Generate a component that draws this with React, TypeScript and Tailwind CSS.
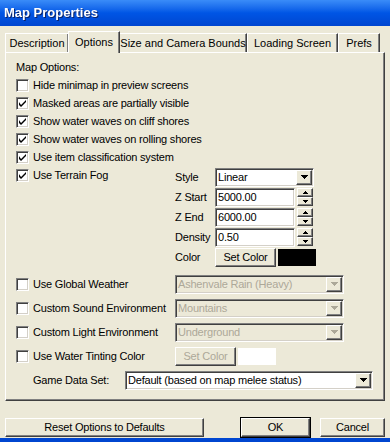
import React from 'react';

const raised =
  'bg-[#ECE9D8] border border-t-white border-l-white border-r-[#404040] border-b-[#404040] shadow-[inset_-1px_-1px_0_#808080]';
const sunken =
  'border border-t-[#808080] border-l-[#808080] border-r-white border-b-white shadow-[inset_1px_1px_0_#404040,inset_-1px_-1px_0_#D4D0C8]';

function Check({ checked }: { checked?: boolean }) {
  return (
    <div className={`w-[13px] h-[13px] shrink-0 bg-white ${sunken} flex items-center justify-center`}>
      {checked && (
        <svg width="7" height="7" viewBox="0 0 7 7">
          <path d="M0 2v3l2 2 5-5V-0L2 5z" fill="#000" />
        </svg>
      )}
    </div>
  );
}

function CheckRow({ label, checked, w }: { label: string; checked?: boolean; w?: string }) {
  return (
    <div className={`flex items-center h-[18px] ${w ?? ''}`}>
      <Check checked={checked} />
      <span className="ml-[4px]">{label}</span>
    </div>
  );
}

function Arrow({ disabled, small, up }: { disabled?: boolean; small?: boolean; up?: boolean }) {
  const c = disabled ? '#ACA899' : '#000';
  if (small)
    return (
      <svg width="5" height="3" viewBox="0 0 5 3">
        <path d={up ? 'M2 0h1v1h1v1h1v1H0V2h1V1h1z' : 'M0 0h5v1H4v1H3v1H2V2H1V1H0z'} fill={c} />
      </svg>
    );
  return (
    <svg width="7" height="4" viewBox="0 0 7 4">
      <path d="M0 0h7v1H6v1H5v1H4v1H3V3H2V2H1V1H0z" fill={c} />
    </svg>
  );
}

function Select({ value, w, disabled }: { value: string; w: string; disabled?: boolean }) {
  return (
    <div className={`${w} h-[19px] ${sunken} ${disabled ? 'bg-[#ECE9D8] text-[#ACA899]' : 'bg-white'} flex items-center`}>
      <span className="flex-1 pl-[2px] truncate">{value}</span>
      <div className={`w-[16px] h-[15px] mr-[1px] ${raised} flex items-center justify-center`}>
        <Arrow disabled={disabled} />
      </div>
    </div>
  );
}

function Spin({ value }: { value: string }) {
  return (
    <div className="flex items-center h-[19px]">
      <div className={`w-[80px] h-[19px] bg-white ${sunken} flex items-center pl-[2px]`}>{value}</div>
      <div className="flex flex-col ml-[2px]">
        <div className={`w-[16px] h-[9px] ${raised} flex items-center justify-center`}>
          <Arrow small up />
        </div>
        <div className={`w-[16px] h-[9px] ${raised} flex items-center justify-center`}>
          <Arrow small />
        </div>
      </div>
    </div>
  );
}

function Btn({ children, w, disabled, def }: { children: React.ReactNode; w: string; disabled?: boolean; def?: boolean }) {
  return (
    <div
      className={`${w} h-[19px] ${raised} flex items-center justify-center ${disabled ? 'text-[#ACA899]' : ''} ${def ? 'outline outline-1 outline-black' : ''}`}
    >
      {children}
    </div>
  );
}

const tabs: [string, string][] = [
  ['Description', 'w-[64px]'],
  ['Options', 'w-[52px]'],
  ['Size and Camera Bounds', 'w-[128px]'],
  ['Loading Screen', 'w-[91px]'],
  ['Prefs', 'w-[42px]'],
];

export default function App() {
  return (
    <div
      className="w-[390px] h-[442px] bg-[#ECE9D8] flex flex-col text-[11px] tracking-[-0.2px] whitespace-nowrap text-black overflow-hidden"
      style={{ fontFamily: '"Liberation Sans", Arial, sans-serif' }}
    >
      {/* Title bar */}
      <div className="h-[26px] shrink-0 bg-gradient-to-b from-[#3A8CF8] via-[#0055E5] to-[#0046D0] flex items-center pl-[4px]">
        <span className="text-white font-bold text-[13px] tracking-normal drop-shadow-[1px_1px_0_#0A246A]">Map Properties</span>
      </div>

      <div className="px-[5px] pt-[5px] flex flex-col">
        {/* Tabs */}
        <div className="flex items-end h-[21px] tracking-normal">
          {tabs.map(([t, w]) =>
            t === 'Options' ? (
              <div
                key={t}
                className={`${w} h-[22px] -mb-[1px] -ml-[1px] -mr-[1px] relative z-10 bg-[#ECE9D8] border-t border-l border-t-white border-l-white border-r border-r-[#404040] shadow-[inset_-1px_0_0_#808080] flex items-center justify-center`}
              >
                {t}
              </div>
            ) : (
              <div
                key={t}
                className={`${w} h-[19px] border-t border-l border-t-white border-l-white border-r border-r-[#404040] shadow-[inset_-1px_0_0_#808080] flex items-center justify-center`}
              >
                {t}
              </div>
            ),
          )}
        </div>

        {/* Panel */}
        <div className="h-[349px] border border-t-white border-l-white border-r-[#404040] border-b-[#404040] shadow-[inset_-1px_-1px_0_#808080] pl-[10px] pt-[6px] flex flex-col">
          <div className="h-[17px] flex items-center">Map Options:</div>
          <CheckRow label="Hide minimap in preview screens" />
          <CheckRow label="Masked areas are partially visible" checked />
          <CheckRow label="Show water waves on cliff shores" checked />
          <CheckRow label="Show water waves on rolling shores" checked />
          <CheckRow label="Use item classification system" checked />

          <div className="flex">
            <CheckRow label="Use Terrain Fog" checked w="w-[159px] shrink-0" />
            <div className="grid grid-cols-[40px_auto] auto-rows-[20px] items-center mt-[1px]">
              <span>Style</span>
              <Select value="Linear" w="w-[99px]" />
              <span>Z Start</span>
              <Spin value="5000.00" />
              <span>Z End</span>
              <Spin value="6000.00" />
              <span>Density</span>
              <Spin value="0.50" />
              <span>Color</span>
              <div className="flex items-center">
                <Btn w="w-[61px]">Set Color</Btn>
                <div className="w-[38px] h-[17px] ml-[2px] bg-black" />
              </div>
            </div>
          </div>

          <div className="flex flex-col mt-[5px]">
            {[
              ['Use Global Weather', 'Ashenvale Rain (Heavy)'],
              ['Custom Sound Environment', 'Mountains'],
              ['Custom Light Environment', 'Underground'],
            ].map(([l, v]) => (
              <div key={l} className="flex items-center h-[24px]">
                <CheckRow label={l} w="w-[159px] shrink-0" />
                <Select value={v} w="w-[169px]" disabled />
              </div>
            ))}
            <div className="flex items-center h-[24px]">
              <CheckRow label="Use Water Tinting Color" w="w-[159px] shrink-0" />
              <Btn w="w-[61px]" disabled>
                Set Color
              </Btn>
              <div className="w-[38px] h-[17px] ml-[2px] bg-white" />
            </div>
            <div className="flex items-center h-[24px]">
              <span className="ml-[17px] w-[92px]">Game Data Set:</span>
              <Select value="Default (based on map melee status)" w="w-[248px]" />
            </div>
          </div>
        </div>

        {/* Buttons */}
        <div className="flex items-center mt-[16px] h-[20px]">
          <Btn w="w-[200px]">Reset Options to Defaults</Btn>
          <div className="ml-[37px]">
            <Btn w="w-[69px]" def>
              OK
            </Btn>
          </div>
          <div className="ml-[10px]">
            <Btn w="w-[65px]">Cancel</Btn>
          </div>
        </div>
      </div>
      <div className="mt-auto h-[4px] bg-[#0046D0]" />
    </div>
  );
}
